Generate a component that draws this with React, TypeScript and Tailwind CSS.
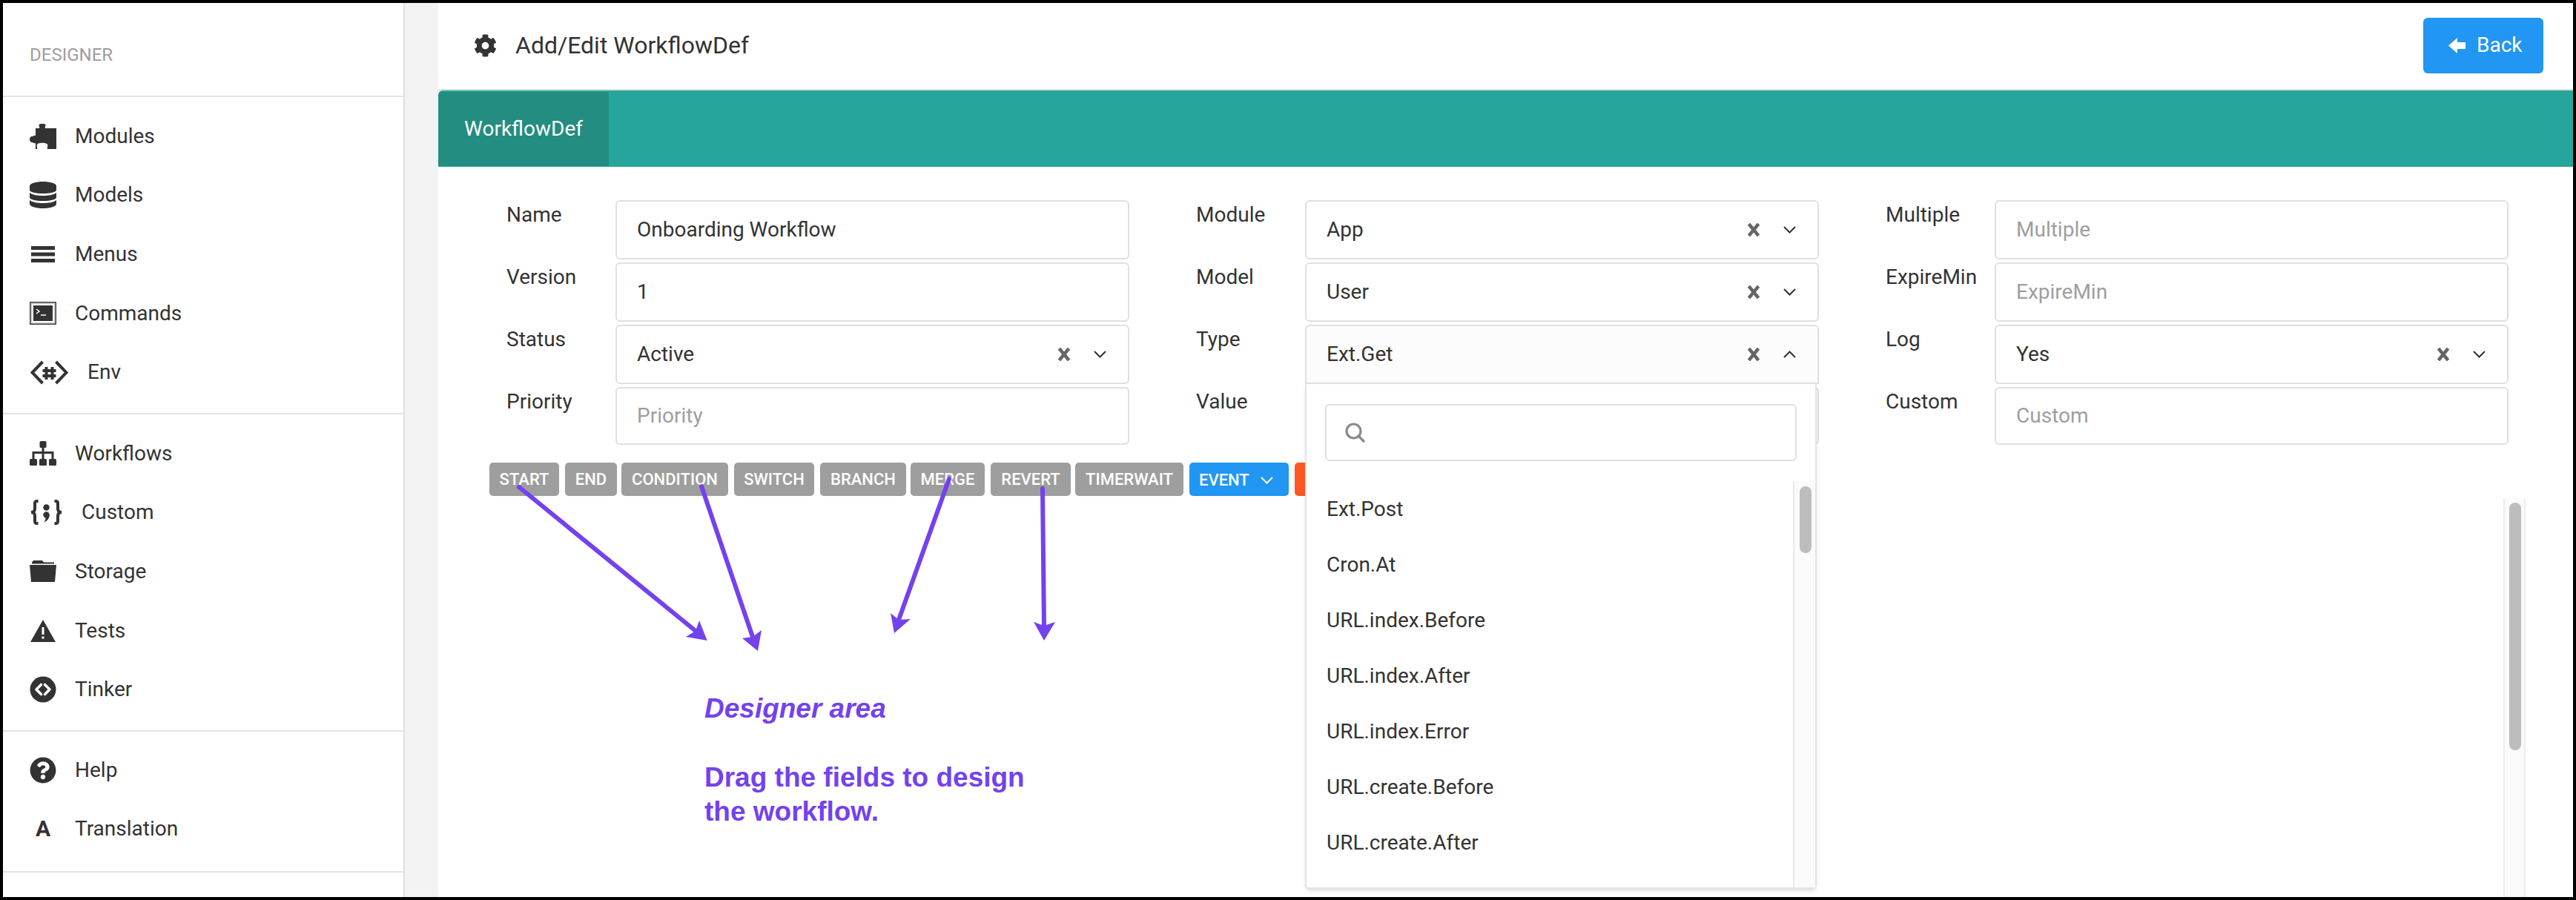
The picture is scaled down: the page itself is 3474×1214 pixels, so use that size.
import type { ReactNode } from "react"
import { FaCog, FaQuestionCircle } from "react-icons/fa"

const PuzzleIcon = () => (
  <svg width="36" height="35" viewBox="0 0 36 35" fill="#333">
    <path d="M8 7H13C14 5 12 4 12.5 2C13 .5 21 .5 21.5 2C22 4 20 5 21 7H36V35H24C23 33 25 32 24 29C23 26 11 26 10 29C9 32 11 33 10 35H8V27C6 28 5 26 3 26C1 26 0 24 0 22C0 20 1 18 3 18C5 18 6 16 8 17Z" />
  </svg>
)

const DatabaseIcon = () => (
  <svg width="36" height="36" viewBox="0 0 36 36" fill="#333">
    <path d="M0 6C0 2.5 8 0 18 0S36 2.5 36 6V11C36 14.5 28 16 18 16S0 14.5 0 11Z" />
    <path d="M0 15C4 18 11 19 18 19S32 18 36 15V21C36 24.5 28 26 18 26S0 24.5 0 21Z" />
    <path d="M0 25C4 28 11 29 18 29S32 28 36 25V30C36 33.5 28 36 18 36S0 33.5 0 30Z" />
  </svg>
)

const BarsIcon = () => (
  <svg width="36" height="22" viewBox="0 0 36 22" fill="#333">
    <rect x="2" y="0" width="32" height="5" />
    <rect x="2" y="8.5" width="32" height="5" />
    <rect x="2" y="17" width="32" height="5" />
  </svg>
)

const TerminalIcon = () => (
  <svg width="36" height="31" viewBox="0 0 36 31">
    <rect width="36" height="31" fill="#444" />
    <rect x="1.5" y="1.5" width="33" height="28" fill="#ccc" />
    <rect x="3" y="3" width="30" height="25" fill="#fff" />
    <rect x="5" y="5" width="26" height="21" fill="#333" />
    <path d="M9 10L13 13L9 16" fill="none" stroke="#fff" strokeWidth="1.5" />
    <path d="M15 18H22" fill="none" stroke="#fff" strokeWidth="1.5" />
  </svg>
)

const EnvIcon = () => (
  <svg width="53" height="33" viewBox="0 0 52 33" fill="none" stroke="#333">
    <path d="M17 2L3 16.5L17 31" strokeWidth="4" />
    <path d="M35 2L49 16.5L35 31" strokeWidth="4" />
    <path d="M22 9V26M30 9V26M17 14H35M17 21H35" strokeWidth="4" />
  </svg>
)

const SitemapIcon = () => (
  <svg width="36" height="33" viewBox="0 0 36 33" fill="#333">
    <rect x="13.5" y="0" width="9" height="9" rx="1.5" />
    <rect x="16.5" y="8" width="3" height="17" />
    <path d="M3.5 25V14H32.5V25H29.5V17H6.5V25Z" />
    <rect x="0" y="24" width="10" height="9" rx="1.5" />
    <rect x="13" y="24" width="10" height="9" rx="1.5" />
    <rect x="26" y="24" width="10" height="9" rx="1.5" />
  </svg>
)

const BracesIcon = () => (
  <svg width="45" height="34" viewBox="0 0 44 34" fill="none" stroke="#333" strokeWidth="4">
    <path d="M11 2H9.5C7 2 6.5 3 6.5 5V12C6.5 15 5 17 1.5 17C5 17 6.5 19 6.5 22V29C6.5 31 7 32 9.5 32H11" />
    <path d="M33 2H34.5C37 2 37.5 3 37.5 5V12C37.5 15 39 17 42.5 17C39 17 37.5 19 37.5 22V29C37.5 31 37 32 34.5 32H33" />
    <circle cx="22" cy="10.5" r="4.2" fill="#333" stroke="none" />
    <circle cx="22" cy="20.5" r="4.2" fill="#333" stroke="none" />
    <path d="M26.2 20.5C26.2 25 23.5 28.5 19 30.5C20.5 28 21 26 21 24Z" fill="#333" stroke="none" />
  </svg>
)

const FolderIcon = () => (
  <svg width="36" height="29" viewBox="0 0 36 29" fill="#333">
    <path d="M3 2.5L5 0H17L19 2.5H33V4.5H3Z" />
    <path d="M0 6H36L34 29H2Z" />
  </svg>
)

const WarningIcon = () => (
  <svg width="36" height="30" viewBox="0 0 36 30" fill="#333">
    <path fillRule="evenodd" d="M18 0L35 30H1ZM16.5 10V20H19.5V10ZM16.5 22.5V25.5H19.5V22.5Z" />
  </svg>
)

const CodeCircleIcon = () => (
  <svg width="36" height="36" viewBox="0 0 36 36">
    <circle cx="18" cy="18" r="17.5" fill="#333" />
    <path d="M15.5 11.5L9 18L15.5 24.5M20.5 11.5L27 18L20.5 24.5" fill="none" stroke="#fff" strokeWidth="3.6" strokeLinecap="round" strokeLinejoin="round" />
  </svg>
)

const ClearIcon = () => (
  <svg width="18" height="18" viewBox="0 0 18 18" fill="none" stroke="#666" strokeWidth="4.5">
    <path d="M2.5 1L15.5 17M15.5 1L2.5 17" />
  </svg>
)

const Chevron = ({ up = false, color = "#333" }: { up?: boolean; color?: string }) => (
  <svg width="17" height="10" viewBox="0 0 17 10" fill="none" stroke={color} strokeWidth="2">
    <path d={up ? "M1 9L8.5 1.5L16 9" : "M1 1L8.5 8.5L16 1"} />
  </svg>
)

const SearchIcon = () => (
  <svg width="27" height="27" viewBox="0 0 27 27" fill="none" stroke="#8a8a8a" strokeWidth="3.2">
    <circle cx="11.5" cy="11.5" r="9.5" />
    <path d="M18 18L25 25" strokeLinecap="round" />
  </svg>
)

const BackArrow = () => (
  <svg width="23" height="21" viewBox="0 0 23 21" fill="#fff">
    <polygon points="0,10.5 12,0 12,6 23,6 23,15 12,15 12,21" />
  </svg>
)

type NavItemProps = { icon: ReactNode; label: string }
function NavItem({ icon, label }: NavItemProps) {
  return (
    <div className="h-[79.6px] flex items-center gap-[25px] pl-[36px] text-[28px] text-[#333]">
      <span className="min-w-[36px] flex justify-center">{icon}</span>
      <span>{label}</span>
    </div>
  )
}

function Sidebar() {
  return (
    <aside className="w-[542px] shrink-0 bg-white border-r-2 border-[#e0e0e0] flex flex-col">
      <div className="h-[127px] shrink-0 flex items-center pl-[36px] pt-[14px] border-b-2 border-[#e4e4e4] text-[24px] text-[#9e9e9e]">
        DESIGNER
      </div>
      <div className="pt-[13px] pb-[15px] border-b-2 border-[#e4e4e4]">
        <NavItem icon={<PuzzleIcon />} label="Modules" />
        <NavItem icon={<DatabaseIcon />} label="Models" />
        <NavItem icon={<BarsIcon />} label="Menus" />
        <NavItem icon={<TerminalIcon />} label="Commands" />
        <NavItem icon={<EnvIcon />} label="Env" />
      </div>
      <div className="pt-[13px] pb-[15px] border-b-2 border-[#e4e4e4]">
        <NavItem icon={<SitemapIcon />} label="Workflows" />
        <NavItem icon={<BracesIcon />} label="Custom" />
        <NavItem icon={<FolderIcon />} label="Storage" />
        <NavItem icon={<WarningIcon />} label="Tests" />
        <NavItem icon={<CodeCircleIcon />} label="Tinker" />
      </div>
      <div className="pt-[12px] pb-[17px] border-b-2 border-[#e4e4e4]">
        <NavItem icon={<FaQuestionCircle size={36} color="#333" />} label="Help" />
        <NavItem icon={<span className="text-[30px] font-bold leading-none">A</span>} label="Translation" />
      </div>
    </aside>
  )
}

function Field({ label, children, className = "h-[80px]" }: { label: string; children: ReactNode; className?: string }) {
  return (
    <div className={`flex ${className}`}>
      <div className="w-[147px] shrink-0 text-[28px] leading-[40px] text-[#333]">{label}</div>
      {children}
    </div>
  )
}

function TextBox({ value, placeholder }: { value?: string; placeholder?: string }) {
  return (
    <div className="flex-1 border-2 border-[#e0e0e0] rounded-[6px] bg-white flex items-center pl-[27px] text-[28px]">
      {value ? <span className="text-[#333]">{value}</span> : <span className="text-[#9e9e9e]">{placeholder}</span>}
    </div>
  )
}

const typeOptions = [
  "Ext.Post",
  "Cron.At",
  "URL.index.Before",
  "URL.index.After",
  "URL.index.Error",
  "URL.create.Before",
  "URL.create.After",
]

function TypeDropdown() {
  return (
    <div className="absolute -left-[2px] top-[calc(100%+2px)] w-[690px] h-[681px] z-20 bg-white border-x-2 border-b-2 border-[#e4e4e4] rounded-b-[6px] shadow-md flex flex-col">
      <div className="h-[131px] shrink-0 px-[25px] pt-[27px]">
        <div className="h-[77px] w-[636px] border-2 border-[#e0e0e0] rounded-[6px] flex items-center pl-[25px]">
          <SearchIcon />
        </div>
      </div>
      <div className="flex-1 flex min-h-0">
        <div className="flex-1 pl-[27px] overflow-hidden">
          {typeOptions.map((item) => (
            <div key={item} className="h-[75px] flex items-center text-[28px] text-[#333]">
              {item}
            </div>
          ))}
        </div>
        <div className="w-[30px] shrink-0 bg-[#fafafa] border-l-2 border-[#e8e8e8] pl-[7px] pt-[7px]">
          <div className="w-[16px] h-[90px] rounded-lg bg-[#bdbdbd]" />
        </div>
      </div>
    </div>
  )
}

function SelectBox({ value, open = false }: { value: string; open?: boolean }) {
  return (
    <div className={`relative flex-1 border-2 border-[#e0e0e0] flex items-center pl-[27px] pr-[29px] text-[28px] text-[#333] ${open ? "rounded-t-[6px] bg-[#fcfcfc]" : "rounded-[6px] bg-white"}`}>
      <span className="flex-1">{value}</span>
      <ClearIcon />
      <span className="ml-[31px] flex">
        <Chevron up={open} />
      </span>
      {open && <TypeDropdown />}
    </div>
  )
}

const toolButtons = [
  { label: "START", className: "w-[94px] mr-[8px]" },
  { label: "END", className: "w-[70px] mr-[6px]" },
  { label: "CONDITION", className: "w-[144px] mr-[8px]" },
  { label: "SWITCH", className: "w-[108px] mr-[8px]" },
  { label: "BRANCH", className: "w-[116px] mr-[6px]" },
  { label: "MERGE", className: "w-[100px] mr-[8px]" },
  { label: "REVERT", className: "w-[108px] mr-[6px]" },
  { label: "TIMERWAIT", className: "w-[146px] mr-[8px]" },
]

function Toolbar() {
  return (
    <div className="flex pl-[69px] mt-[24px] h-[45px]">
      {toolButtons.map((b) => (
        <div key={b.label} className={`${b.className} bg-[#9e9e9e] rounded-[5px] flex items-center justify-center text-white text-[22px] font-medium`}>
          {b.label}
        </div>
      ))}
      <div className="w-[134px] mr-[8px] bg-[#2196f3] rounded-[5px] flex items-center pl-[13px] pt-[2px] gap-[15px] text-white text-[22px] font-medium">
        EVENT
        <Chevron color="#fff" />
      </div>
      <div className="w-[60px] bg-[#ff5722] rounded-[5px]" />
    </div>
  )
}

function Main() {
  return (
    <main className="flex-1 min-w-0 bg-white flex flex-col">
      <header className="h-[118px] shrink-0 border-b-2 border-[#e0e0e0] flex items-center pl-[48px] pr-[40px] pb-[2px]">
        <FaCog size={31} color="#333" />
        <h1 className="ml-[25px] flex-1 text-[32px] text-[#333]">Add/Edit WorkflowDef</h1>
        <button className="w-[162px] h-[75px] bg-[#2196f3] rounded-[6px] flex items-center pl-[34px] gap-[15px] text-[28px] text-white">
          <BackArrow />
          Back
        </button>
      </header>

      <div className="h-[103px] shrink-0 bg-[#26a69a] rounded-tl-[6px] pt-[2px] pb-[1px]">
        <div className="w-[230px] h-full bg-[#228d80] rounded-tl-[6px] flex items-center justify-center text-[28px] text-white">
          WorkflowDef
        </div>
      </div>

      <div className="grid grid-cols-[repeat(3,840px)] gap-x-[90px] pl-[92px] pt-[45px]">
        <div className="flex flex-col gap-[4px]">
          <Field label="Name"><TextBox value="Onboarding Workflow" /></Field>
          <Field label="Version"><TextBox value="1" /></Field>
          <Field label="Status"><SelectBox value="Active" /></Field>
          <Field label="Priority" className="h-[78px]"><TextBox placeholder="Priority" /></Field>
        </div>
        <div className="flex flex-col gap-[4px]">
          <Field label="Module"><SelectBox value="App" /></Field>
          <Field label="Model"><SelectBox value="User" /></Field>
          <Field label="Type"><SelectBox value="Ext.Get" open /></Field>
          <Field label="Value" className="h-[78px]"><TextBox /></Field>
        </div>
        <div className="flex flex-col gap-[4px]">
          <Field label="Multiple"><TextBox placeholder="Multiple" /></Field>
          <Field label="ExpireMin"><TextBox placeholder="ExpireMin" /></Field>
          <Field label="Log"><SelectBox value="Yes" /></Field>
          <Field label="Custom" className="h-[78px]"><TextBox placeholder="Custom" /></Field>
        </div>
      </div>

      <Toolbar />

      {/* designer canvas */}
      <div className="flex-1 min-h-0 flex justify-end pr-[64px] pt-[3px]">
        <div className="w-[30px] bg-[#fafafa] border-x-2 border-[#eeeeee] pl-[6px] pt-[6px]">
          <div className="w-[16px] h-[334px] rounded-lg bg-[#bdbdbd]" />
        </div>
      </div>
    </main>
  )
}

const arrows = [
  { line: "M700 657L938 851", head: "953.7,864 943,837 938,851 925,859" },
  { line: "M946 656L1015 859", head: "1022,878 1027,850 1015,859 1001,861" },
  { line: "M1280 646L1212 836", head: "1206,854 1201,827 1212,836 1228,835" },
  { line: "M1406 659L1408 844", head: "1408,864 1394,839 1408,844 1423,839" },
]

function Annotations() {
  return (
    <>
      <svg className="absolute inset-0 z-30 pointer-events-none" width="3474" height="1214" viewBox="0 0 3474 1214">
        {arrows.map((a) => (
          <g key={a.line}>
            <path d={a.line} fill="none" stroke="#7342ee" strokeWidth="6" strokeLinecap="round" />
            <polygon points={a.head} fill="#7342ee" />
          </g>
        ))}
      </svg>
      <div className="absolute z-30 left-[950px] top-[933px] text-[37px] leading-[46px] font-bold text-[#7342ee] font-['Liberation_Sans',sans-serif]">
        <div className="italic mb-[47px]">Designer area</div>
        <div>Drag the fields to design</div>
        <div>the workflow.</div>
      </div>
    </>
  )
}

export default function App() {
  return (
    <div className="relative w-[3474px] h-[1214px] bg-black p-[4px] overflow-hidden font-['Roboto',sans-serif]">
      <div className="flex h-full">
        <Sidebar />
        <div className="w-[45px] shrink-0 bg-[#f3f3f3]" />
        <Main />
      </div>
      <Annotations />
    </div>
  )
}
